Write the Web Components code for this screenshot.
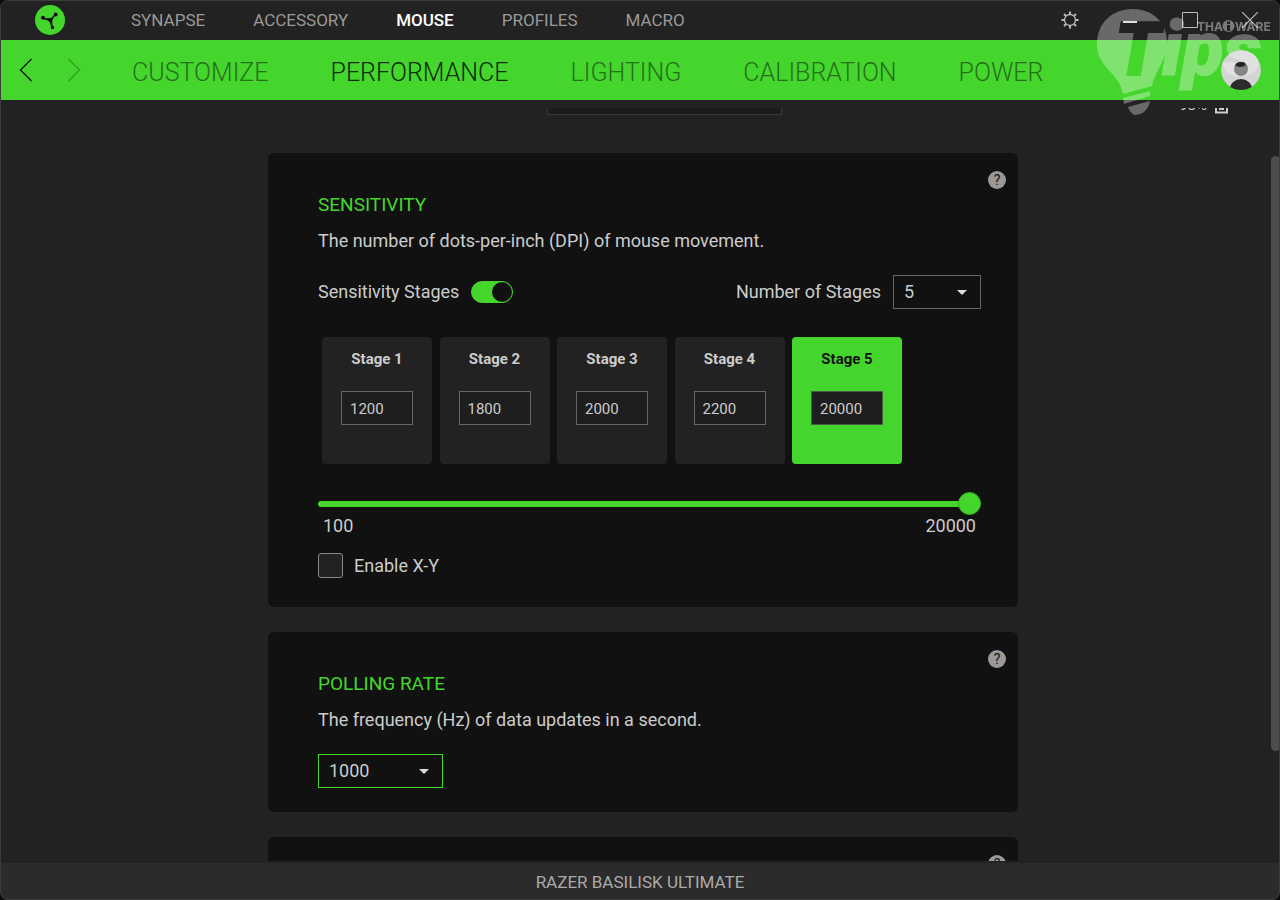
<!DOCTYPE html>
<html lang="en">
<head>
<meta charset="utf-8">
<meta name="viewport" content="width=device-width, initial-scale=1">
<title>Razer Synapse</title>
<style>
  html, body { margin: 0; height: 100%; background: #0a0a0a; }
  body { font-family: Roboto, "Liberation Sans", sans-serif; color: #ccc; }
</style>
</head>
<body>
<synapse-app></synapse-app>

<script>
const define = (name, html, setup) => {
  const template = document.createElement('template');
  template.innerHTML = '<style>*{box-sizing:border-box}button{font:inherit;color:inherit;background:none;border:0;padding:0;cursor:pointer}</style>' + html;
  customElements.define(name, class extends HTMLElement {
    constructor() {
      super();
      this.attachShadow({ mode: 'open' }).append(template.content.cloneNode(true));
    }
    connectedCallback() { if (setup) setup(this, this.shadowRoot); }
  });
};

/* Link of a navigation row */
define('nav-link', `
<style>
  :host { display: block; }
  a { display: block; color: var(--nav-color); text-decoration: none; white-space: nowrap; }
  :host([current]) a { color: var(--nav-current); }
</style>
<a href="#"><slot></slot></a>`, (host, root) => {
  if (host.hasAttribute('current')) root.querySelector('a').setAttribute('aria-current', 'page');
});

/* Top bar with logo, product tabs and window controls */
define('title-bar', `
<style>
  :host { display: flex; align-items: center; height: 40px; background: #222;
          --nav-color: #999; --nav-current: #fff; }
  .logo { width: 30px; height: 30px; margin: 0 66px 0 35px; flex: none; }
  nav { display: flex; gap: 48px; font-size: 17px; line-height: 24px; flex: 1; }
  nav-link[current] { font-weight: 500; }
  .tools { display: flex; }
  button { width: 60px; height: 40px; display: grid; place-items: center; }
  button svg { fill: none; stroke: #bbb; }
</style>
<svg class="logo" viewBox="0 0 30 30" role="img" aria-label="Synapse">
  <circle cx="15" cy="15" r="15" fill="#44d62c"/>
  <g stroke="#111" stroke-width="2" fill="#111" stroke-linecap="round">
    <path stroke-width="1.600" d="M15 15.500L8 13M15 15.500L20.500 9.500M15 15.500L17.300 22"/>
    <path stroke="none" d="M11 13.200L16 13L18.800 12.500L17.200 15.500L17.400 20L15.500 19L14.200 16.500Z"/>
    <circle cx="8" cy="12.800" r="1"/><circle cx="20.700" cy="9.500" r="1"/><circle cx="17.500" cy="22.500" r=".8"/>
  </g>
</svg>
<nav aria-label="Products">
  <nav-link>SYNAPSE</nav-link><nav-link>ACCESSORY</nav-link><nav-link current>MOUSE</nav-link><nav-link>PROFILES</nav-link><nav-link>MACRO</nav-link>
</nav>
<div class="tools">
  <button aria-label="Settings"><svg width="18" height="18" viewBox="0 0 18 18" stroke-width="1.300">
    <circle cx="9" cy="9" r="5.500"/>
    <path stroke-width="2" d="M9 .5V3.500M9 14.500V17.500M.5 9H3.500M14.500 9H17.500M3 3L5 5M13 13L15 15M15 3L13 5M5 13L3 15"/></svg></button>
  <button aria-label="Minimize"><svg width="16" height="16" viewBox="0 0 16 16"><path stroke-width="2" stroke="#ddd" d="M1 10H15"/></svg></button>
  <button aria-label="Maximize"><svg width="16" height="16" viewBox="0 0 16 16"><path d="M.5 .5H15.500V15.500H.5Z"/></svg></button>
  <button aria-label="Close"><svg width="16" height="16" viewBox="0 0 16 16"><path stroke-width="1.200" d="M0 0L16 16M16 0L0 16"/></svg></button>
</div>`);

/* Green bar with history buttons and section tabs */
define('section-bar', `
<style>
  :host { display: flex; align-items: center; height: 60px; padding: 0 19px 0 14px; background: #44d62c;
          --nav-color: #26701b; --nav-current: #0c2a08; }
  .history { display: flex; gap: 24px; width: 118px; }
  .history button { width: 24px; height: 32px; display: grid; place-items: center; }
  .history svg { fill: none; stroke: #111; stroke-width: 1.300; }
  .history button:disabled svg { stroke: #30a021; }
  nav { display: flex; gap: 62px; flex: 1; font-size: 25px; font-weight: 300; line-height: 30px; padding-top: 6px; }
  .avatar { width: 40px; height: 40px; display: block; }
</style>
<div class="history">
  <button aria-label="Back"><svg width="14" height="24" viewBox="0 0 14 24"><path d="M12.500 1L1.500 12L12.500 23"/></svg></button>
  <button aria-label="Forward" disabled><svg width="14" height="24" viewBox="0 0 14 24"><path d="M1.500 1L12.500 12L1.500 23"/></svg></button>
</div>
<nav aria-label="Sections">
  <nav-link>CUSTOMIZE</nav-link><nav-link current>PERFORMANCE</nav-link><nav-link>LIGHTING</nav-link><nav-link>CALIBRATION</nav-link><nav-link>POWER</nav-link>
</nav>
<button class="avatar" aria-label="Account"><svg width="40" height="40" viewBox="0 0 40 40">
  <defs><clipPath id="round"><circle cx="20" cy="20" r="20"/></clipPath></defs>
  <g clip-path="url(#round)">
    <circle cx="20" cy="20" r="20" fill="#d4d4d4"/>
    <ellipse cx="20" cy="39" rx="11" ry="10" fill="#2c2c2c"/>
    <circle cx="20" cy="19" r="7" fill="#4a4a4a"/>
    <path d="M13.500 16.500A7 7 0 0 1 26.500 16.500Z" fill="#222"/>
  </g></svg></button>`);

/* Drop-down: options come from the "options" attribute */
define('drop-down', `
<style>
  :host { display: grid; width: 88px; height: 34px; --line: #666; }
  :host([wide]) { width: 125px; }
  :host([active]) { --line: #44d62c; }
  select, svg { grid-area: 1 / 1; }
  select { appearance: none; width: 100%; font: 18px/24px Roboto, sans-serif; color: #ccc; background: #111;
           border: 1px solid var(--line); border-radius: 0; padding: 0 24px 0 10px; margin: 0; outline: 0; }
  svg { justify-self: end; align-self: center; margin-right: 14px; pointer-events: none; fill: #ddd; }
</style>
<select></select>
<svg width="10" height="5" viewBox="0 0 10 5"><path d="M0 0H10L5 5Z"/></svg>`, (host, root) => {
  const select = root.querySelector('select');
  select.setAttribute('aria-label', host.getAttribute('label'));
  const chosen = host.getAttribute('value');
  select.replaceChildren(...host.getAttribute('options').split(',').map(o => new Option(o, o, o === chosen, o === chosen)));
});

/* One DPI stage */
define('dpi-stage', `
<style>
  :host { display: block; width: 110px; height: 127px; border-radius: 4px; background: #222; color: #ccc; }
  :host([active]) { background: #44d62c; color: #111; }
  label { display: flex; flex-direction: column; align-items: center; gap: 22px; padding-top: 12px;
          font-size: 15px; font-weight: 700; line-height: 20px; }
  input { width: 72px; height: 34px; padding: 1px 8px 0; margin: 0; border: 1px solid #666; border-radius: 0;
          background: #1e1e1e; color: #ccc; font: 400 15px/20px Roboto, sans-serif; outline: 0; }
  :host([active]) input { border-color: #4b5b48; }
</style>
<label><slot></slot><input type="text" inputmode="numeric"></label>`, (host, root) => {
  root.querySelector('input').value = host.getAttribute('value');
});

/* Settings panel with heading, description and help button */
define('setting-card', `
<style>
  :host { display: grid; grid-template-columns: 1fr 18px; gap: 7px; align-items: start;
          padding: 18px 12px 24px 50px; border-radius: 6px; background: #111; }
  .body { padding-top: 22px; }
  h2 { margin: 0 0 12px; font-size: 19px; font-weight: 400; line-height: 24px; color: #44d62c; }
  p { margin: 0 0 22px; font-size: 18px; line-height: 24px; color: #ccc; }
  button { width: 18px; height: 18px; border-radius: 50%; background: #999; color: #111;
           font-size: 14px; line-height: 18px; text-align: center; }
</style>
<div class="body"><h2><slot name="title"></slot></h2><p><slot name="text"></slot></p><slot></slot></div>
<button aria-label="Help">?</button>`);

define('sensitivity-panel', `
<style>
  :host { display: block; padding-bottom: 5px; font-size: 18px; line-height: 24px; color: #ccc; }
  .row { display: flex; align-items: center; justify-content: space-between; height: 34px; margin-bottom: 28px; }
  .field { display: flex; align-items: center; gap: 12px; }
  .switch { appearance: none; display: grid; align-items: center; width: 42px; height: 22px; margin: 0; border-radius: 11px;
            border: 1px solid #44d62c; background: #111; cursor: pointer; }
  .switch::before { content: ""; width: 20px; height: 20px; border-radius: 50%; background: #44d62c; }
  .switch:checked { background: #44d62c; justify-items: end; }
  .switch:checked::before { background: #111; }
  .stages { display: flex; justify-content: space-between; width: 580px; margin: 0 0 28px 4px; }
  .range { appearance: none; display: block; width: 100%; height: 24px; margin: 0; background: none; cursor: pointer; }
  .range::-webkit-slider-runnable-track { height: 6px; border-radius: 3px; background: #44d62c; }
  .range::-webkit-slider-thumb { appearance: none; width: 23px; height: 23px; margin-top: -9px; border-radius: 50%;
            background: #44d62c; border: 1px solid #37a824; }
  .ends { display: flex; justify-content: space-between; padding: 0 5px; line-height: 20px; margin-bottom: 17px; }
  .check { display: flex; align-items: center; gap: 11px; }
  .check input { appearance: none; width: 25px; height: 25px; margin: 0; border: 1px solid #888; border-radius: 3px; background: #222; }
</style>
<div class="row">
  <label class="field">Sensitivity Stages <input class="switch" type="checkbox" role="switch" checked></label>
  <div class="field"><span>Number of Stages</span><drop-down label="Number of Stages" options="1,2,3,4,5" value="5"></drop-down></div>
</div>
<div class="stages">
  <dpi-stage value="1200">Stage 1</dpi-stage>
  <dpi-stage value="1800">Stage 2</dpi-stage>
  <dpi-stage value="2000">Stage 3</dpi-stage>
  <dpi-stage value="2200">Stage 4</dpi-stage>
  <dpi-stage value="20000" active>Stage 5</dpi-stage>
</div>
<input class="range" type="range" min="100" max="20000" value="20000" aria-label="DPI">
<div class="ends"><span>100</span><span>20000</span></div>
<label class="check"><input type="checkbox">Enable X-Y</label>`);

/* Profile picker and battery level */
define('profile-row', `
<style>
  :host { display: grid; grid-template-columns: 1fr 235px 1fr; align-items: end; padding: 0 52px 0 101px; margin-bottom: 38px; }
  select { grid-column: 2; appearance: none; height: 34px; border: 1px solid #383838; border-radius: 0; background: #1b1b1b;
           color: #ccc; font: 18px/24px Roboto, sans-serif; padding: 0 11px; margin: 0; }
  .battery { display: flex; justify-content: flex-end; align-items: end; gap: 8px; font-size: 15px; line-height: 20px; }
  svg { display: block; margin-bottom: 1px; }
</style>
<select aria-label="Profile"><option>Default</option></select>
<div class="battery"><span>98%</span><svg width="13" height="22" viewBox="0 0 13 22" aria-hidden="true">
  <path d="M1 3H12V20.500H1Z" fill="none" stroke="#ccc" stroke-width="2"/><path d="M4 5H9V18H4Z" fill="#ccc"/></svg></div>`);

/* Translucent brand mark over the top right corner */
define('brand-mark', `
<style>
  :host { position: absolute; top: 0; right: 0; width: 190px; height: 120px; pointer-events: none; }
  svg { display: block; }
</style>
<svg width="190" height="120" viewBox="0 0 190 120">
  <defs><mask id="cut" maskUnits="userSpaceOnUse" x="0" y="0" width="190" height="120">
    <rect width="190" height="120" fill="#fff"/>
    <text x="25" y="75" font-family="Roboto, sans-serif" font-size="74" font-weight="900" font-style="italic" fill="#000" stroke="#000" stroke-width="2">T</text>
  </mask></defs>
  <g fill="#fff" opacity=".32">
    <path mask="url(#cut)" d="M43 9C63 9 77 23 77 42C77 60 66 69 62 86L33 94C29 72 7 68 7 44C7 23 22 9 43 9Z"/>
    <path d="M33 98L60 91V96L34 104Z"/>
    <path d="M38 107L60 101C58 111 52 115 44 115C41 113 39 110 38 107Z"/>
    <text x="72" y="75" font-family="Roboto, sans-serif" font-size="76" font-weight="900" font-style="italic" stroke="#fff">ips</text>
  </g>
  <g fill="#fff" opacity=".4" font-family="Inter, sans-serif" font-size="12" font-weight="700">
    <text x="107" y="31">THA</text>
    <path fill-rule="evenodd" d="M138.500 20A6 6 0 1 0 138.500 32A6 6 0 1 0 138.500 20ZM137 25H140V31H137ZM137 21.500H140V24H137Z"/>
    <text x="145" y="31">WARE</text>
  </g>
</svg>`);

define('synapse-app', `
<style>
  :host { position: relative; display: flex; flex-direction: column; height: 100vh; overflow: hidden; background: #222;
          border-radius: 8px; }
  .frame { position: absolute; inset: 0; border: 1px solid #3c3c3c; border-radius: 8px; pointer-events: none; }
  main { position: relative; flex: 1; min-height: 0; padding: 8px 0 2px; }
  .scroll { height: 100%; overflow: auto; scrollbar-width: none; }
  .cards { display: grid; gap: 25px; max-width: 750px; margin: 0 auto; padding-bottom: 25px; }
  .center { padding-left: 6px; }
  .bar { position: absolute; top: 56px; right: 0; width: 9px; height: 78%; border-radius: 5px; background: #4d4d4d; }
  footer { padding: 7px 0 6px; background: #2b2b2b; color: #aaa; font-size: 17px; line-height: 24px; text-align: center; }
</style>
<title-bar></title-bar>
<section-bar></section-bar>
<main>
  <div class="scroll">
    <profile-row></profile-row>
    <div class="center"><div class="cards">
      <setting-card>
        <span slot="title">SENSITIVITY</span>
        <span slot="text">The number of dots-per-inch (DPI) of mouse movement.</span>
        <sensitivity-panel></sensitivity-panel>
      </setting-card>
      <setting-card>
        <span slot="title">POLLING RATE</span>
        <span slot="text">The frequency (Hz) of data updates in a second.</span>
        <drop-down wide active label="Polling rate" options="125,500,1000" value="1000"></drop-down>
      </setting-card>
      <setting-card></setting-card>
    </div></div>
  </div>
  <div class="bar"></div>
</main>
<footer>RAZER BASILISK ULTIMATE</footer>
<brand-mark></brand-mark>
<div class="frame"></div>`, (host, root) => {
  root.querySelector('.scroll').scrollTop = 27;
});
</script>
</body>
</html>
